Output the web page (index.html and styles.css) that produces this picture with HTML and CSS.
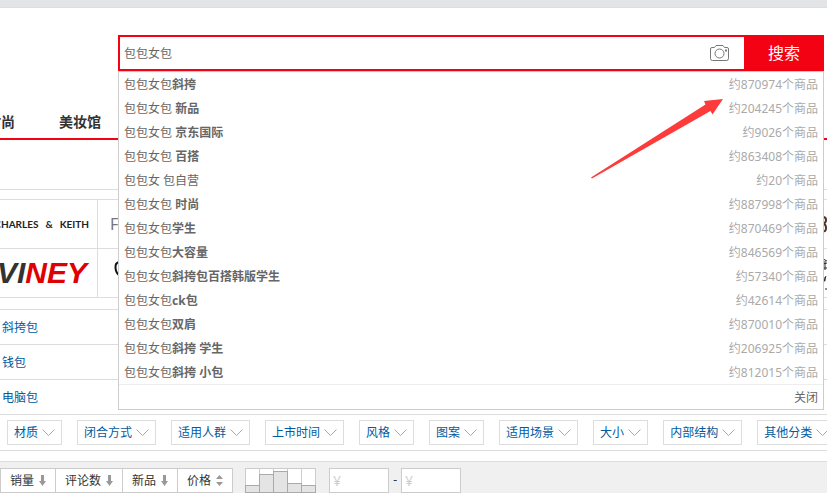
FILE: index.html
```html
<!DOCTYPE html>
<html lang="zh-CN">
<head>
  <meta charset="UTF-8" />
  <meta name="viewport" content="width=device-width, initial-scale=1.0"/>
  <title>包包女包 - 商品搜索</title>
  <link rel="stylesheet" href="styles.css">
</head>
<body>

  <div class="topbar"></div>

  <!-- Search + suggestions -->
  <header class="header">
    <form class="search">
      <input type="text" class="search-input" aria-label="搜索商品" value="包包女包" autocomplete="off" />
      <button type="button" class="camera-btn" aria-label="拍照搜索">
        <svg width="20" height="16" viewBox="0 0 20 16" fill="none" stroke="#777">
          <path d="M2 2.5H4.5L6 .5H13L14.5 2.5H17Q18.5 2.5 18.5 4V13.5Q18.5 15.5 16.5 15.5H2.5Q.5 15.5 .5 13.5V4Q.5 2.5 2 2.5Z"/>
          <circle cx="9.5" cy="8.5" r="4.5"/>
          <path d="M15 5.5H17" stroke-width="2"/>
        </svg>
      </button>
      <button type="submit" class="search-btn">搜索</button>

      <div class="suggest">
        <ul class="suggest-list">
          <li><span>包包女包<b>斜挎</b></span><span class="count">约870974个商品</span></li>
          <li><span>包包女包 <b>新品</b></span><span class="count">约204245个商品</span></li>
          <li><span>包包女包 <b>京东国际</b></span><span class="count">约9026个商品</span></li>
          <li><span>包包女包 <b>百搭</b></span><span class="count">约863408个商品</span></li>
          <li><span>包包女 包自营</span><span class="count">约20个商品</span></li>
          <li><span>包包女包 <b>时尚</b></span><span class="count">约887998个商品</span></li>
          <li><span>包包女包<b>学生</b></span><span class="count">约870469个商品</span></li>
          <li><span>包包女包<b>大容量</b></span><span class="count">约846569个商品</span></li>
          <li><span>包包女包<b>斜挎包百搭韩版学生</b></span><span class="count">约57340个商品</span></li>
          <li><span>包包女包<b>ck包</b></span><span class="count">约42614个商品</span></li>
          <li><span>包包女包<b>双肩</b></span><span class="count">约870010个商品</span></li>
          <li><span>包包女包<b>斜挎 学生</b></span><span class="count">约206925个商品</span></li>
          <li><span>包包女包<b>斜挎 小包</b></span><span class="count">约812015个商品</span></li>
        </ul>
        <button type="button" class="suggest-close">关闭</button>
        <svg class="pointer" width="132" height="80" viewBox="0 0 132 80">
          <path d="M0 78.5L114.5 5.5L113 2L132 0L121.5 15.5L119.5 12L1 79.5Z" fill="#fd3b3b"/>
        </svg>
      </div>
    </form>
  </header>

  <nav class="nav">
    <a href="#">时尚</a>
    <a href="#">美妆馆</a>
  </nav>

  <main>
    <!-- Brands -->
    <div class="brands">
      <div class="brand-row">
        <a href="#" class="brand charles"><span>CHARLES</span> <span>&amp;</span> <span>KEITH</span></a>
        <a href="#" class="brand brand-rest fion" aria-label="品牌">
          <span>F</span>
          <svg width="4" height="40" viewBox="0 0 4 40" fill="none" stroke="#4b3328" stroke-width="2">
            <path d="M0 13Q3 13 3 16T0 20Q3 20 3 24T0 27"/>
          </svg>
        </a>
      </div>
      <div class="brand-row">
        <a href="#" class="brand viney"><span>VI</span>NEY</a>
        <a href="#" class="brand brand-rest" aria-label="品牌">
          <svg width="10" height="40" viewBox="0 0 10 40" fill="none" stroke="#111" stroke-width="2">
            <path d="M9 9Q5 10 5.500 15T9 22"/>
          </svg>
          <svg width="4" height="40" viewBox="0 0 4 40" fill="none" stroke="#2b2222">
            <path d="M0 6L4 8M0 11L4 10M0 15H4M2 8V17M3 23L0 31M2 24V28M3 35V37"/>
          </svg>
        </a>
      </div>
    </div>

    <!-- Categories -->
    <ul class="cates">
      <li><a href="#">斜挎包</a></li>
      <li><a href="#">钱包</a></li>
      <li><a href="#">电脑包</a></li>
    </ul>

    <!-- Filters -->
    <div class="filters">
      <button type="button">材质<svg width="13" height="8" viewBox="0 0 13 8"><path d="M.5 .5L6.5 6.5L12.5 .5"/></svg></button>
      <button type="button">闭合方式<svg width="13" height="8" viewBox="0 0 13 8"><path d="M.5 .5L6.5 6.5L12.5 .5"/></svg></button>
      <button type="button">适用人群<svg width="13" height="8" viewBox="0 0 13 8"><path d="M.5 .5L6.5 6.5L12.5 .5"/></svg></button>
      <button type="button">上市时间<svg width="13" height="8" viewBox="0 0 13 8"><path d="M.5 .5L6.5 6.5L12.5 .5"/></svg></button>
      <button type="button">风格<svg width="13" height="8" viewBox="0 0 13 8"><path d="M.5 .5L6.5 6.5L12.5 .5"/></svg></button>
      <button type="button">图案<svg width="13" height="8" viewBox="0 0 13 8"><path d="M.5 .5L6.5 6.5L12.5 .5"/></svg></button>
      <button type="button">适用场景<svg width="13" height="8" viewBox="0 0 13 8"><path d="M.5 .5L6.5 6.5L12.5 .5"/></svg></button>
      <button type="button">大小<svg width="13" height="8" viewBox="0 0 13 8"><path d="M.5 .5L6.5 6.5L12.5 .5"/></svg></button>
      <button type="button">内部结构<svg width="13" height="8" viewBox="0 0 13 8"><path d="M.5 .5L6.5 6.5L12.5 .5"/></svg></button>
      <button type="button">其他分类<svg width="13" height="8" viewBox="0 0 13 8"><path d="M.5 .5L6.5 6.5L12.5 .5"/></svg></button>
    </div>

    <!-- Sort bar -->
    <div class="sortbar">
      <div class="sort">
        <button type="button">销量<svg width="7" height="11" viewBox="0 0 7 11"><path d="M2 0H5V6H7L3.5 11L0 6H2Z"/></svg></button>
        <button type="button">评论数<svg width="7" height="11" viewBox="0 0 7 11"><path d="M2 0H5V6H7L3.5 11L0 6H2Z"/></svg></button>
        <button type="button">新品<svg width="7" height="11" viewBox="0 0 7 11"><path d="M2 0H5V6H7L3.5 11L0 6H2Z"/></svg></button>
        <button type="button">价格<svg width="7" height="11" viewBox="0 0 7 11"><path d="M0 4L3.5 0L7 4ZM0 7H7L3.5 11Z"/></svg></button>
      </div>
      <div class="histogram">
        <i><u style="height:8px"></u></i>
        <i><u style="height:19px"></u></i>
        <i><u style="height:22px"></u></i>
        <i><u style="height:10px"></u></i>
        <i><u style="height:8px"></u></i>
      </div>
      <div class="price">
        <input type="text" placeholder="¥" aria-label="最低价" />
        <span>-</span>
        <input type="text" placeholder="¥" aria-label="最高价" />
      </div>
    </div>
  </main>

</body>
</html>
```
FILE: styles.css
```css
/* Reset & base */
* { box-sizing: border-box; margin: 0; padding: 0; }
body {
  font: 12px/18px "Noto Sans", "Noto Sans CJK SC", sans-serif;
  color: #333;
  background: #fff;
  overflow-x: hidden;
}
ul { list-style: none; }
a { color: #005aa0; text-decoration: none; }
button, input { font: inherit; color: inherit; outline: none; }
button { cursor: pointer; background: none; border: none; }
svg { display: block; flex: none; }

.topbar {
  height: 8px;
  background: #e3e4e5;
  border-bottom: 1px solid #ddd;
}

/* Search box */
.header { padding: 27px 3px 0 118px; }
.search {
  position: relative;
  display: flex;
  height: 36px;
  border: 2px solid #f30213;
  border-right: none;
}
.search-input {
  flex: 1;
  min-width: 0;
  padding: 2px 4px 0;
  border: none;
  color: #666;
}
.camera-btn { padding: 0 14px; }
.search-btn {
  width: 80px;
  margin: -2px 0;
  background: #f30213;
  color: #fff;
  font-size: 16px;
}

/* Suggestions */
.suggest {
  position: absolute;
  top: 34px;
  left: -2px;
  right: 0;
  z-index: 10;
  background: #fff;
  border: 1px solid #ccc;
  color: #666;
  line-height: 26px;
}
.suggest-list { border-bottom: 1px solid #eee; }
.suggest-list li {
  display: flex;
  justify-content: space-between;
  height: 24px;
  padding: 0 5px;
}
.count { color: #aaa; }
.suggest-close {
  display: block;
  height: 24px;
  margin-left: auto;
  padding: 2px 5px 0;
  line-height: 22px;
}
.pointer {
  position: absolute;
  top: 27px;
  right: 100px;
}

/* Nav */
.nav {
  display: flex;
  gap: 44px;
  height: 69px;
  margin-bottom: 49px;
  padding-top: 35px;
  border-bottom: 2px solid #f30213;
  font-size: 14px;
  line-height: 32px;
  font-weight: bold;
}
.nav a { color: #333; }
.nav a:first-child { margin-left: -13px; }

/* Brands */
.brands {
  border-top: 1px solid #ddd;
  padding-top: 9px;
  margin-bottom: 11px;
}
.brand-row {
  display: flex;
  height: 49px;
  border-top: 1px solid #ddd;
}
.brand-row:last-child {
  height: 50px;
  border-bottom: 1px solid #ddd;
}
.brand {
  display: flex;
  align-items: center;
  justify-content: flex-end;
  width: 98px;
  padding-right: 8px;
  border-right: 1px solid #ddd;
  white-space: nowrap;
}
.brand-rest {
  flex: 1;
  justify-content: space-between;
  padding: 0 0 0 12px;
  border: none;
}
.charles {
  gap: 7px;
  color: #222;
  font: bold 10px/12px Lato, sans-serif;
}
.fion {
  color: #777;
  font-size: 16px;
}
.viney {
  padding-right: 10px;
  color: #e00000;
  font: italic bold 30px/30px "Liberation Sans", sans-serif;
}
.viney span { color: #333; }

/* Categories */
.cates li {
  height: 35px;
  padding-left: 2px;
  border-top: 1px solid #ddd;
  line-height: 36px;
}

/* Filters */
.filters {
  display: flex;
  gap: 15px;
  height: 37px;
  padding: 5px 7px;
  border: 1px solid #ddd;
  border-width: 1px 0;
  overflow: hidden;
}
.filters button {
  flex: none;
  display: flex;
  align-items: center;
  gap: 4px;
  height: 25px;
  padding: 0 6px;
  border: 1px solid #ddd;
  color: #005aa0;
}
.filters path { fill: none; stroke: #aaa; }

/* Sort bar */
.sortbar {
  display: flex;
  margin-top: 10px;
  padding-top: 6px;
  border-top: 1px solid #ddd;
  background: #f0f0f0;
}
.sort { display: flex; }
.sort button {
  display: flex;
  align-items: center;
  gap: 5px;
  height: 25px;
  padding: 0 9px;
  border: 1px solid #ccc;
  background: #fff;
}
.sort button + button { margin-left: -1px; }
.sort path { fill: #999; }

.histogram {
  display: flex;
  margin-left: 12px;
}
.histogram i {
  display: flex;
  align-items: flex-end;
  width: 15px;
  border: 1px solid #ccc;
  border-bottom: none;
  background: #fff;
}
.histogram i + i { margin-left: -1px; }
.histogram u {
  flex: none;
  position: relative;
  width: 15px;
  margin-left: -1px;
  border: 1px solid #aaa;
  background: #e4e4e4;
}

.price {
  display: flex;
  margin-left: 13px;
}
.price span {
  width: 12px;
  line-height: 24px;
  text-align: center;
}
.price input {
  width: 60px;
  height: 25px;
  padding: 0 3px;
  border: 1px solid #ccc;
  background: #fff;
  font-size: 14px;
}
.price input::placeholder { color: #ccc; }
```
